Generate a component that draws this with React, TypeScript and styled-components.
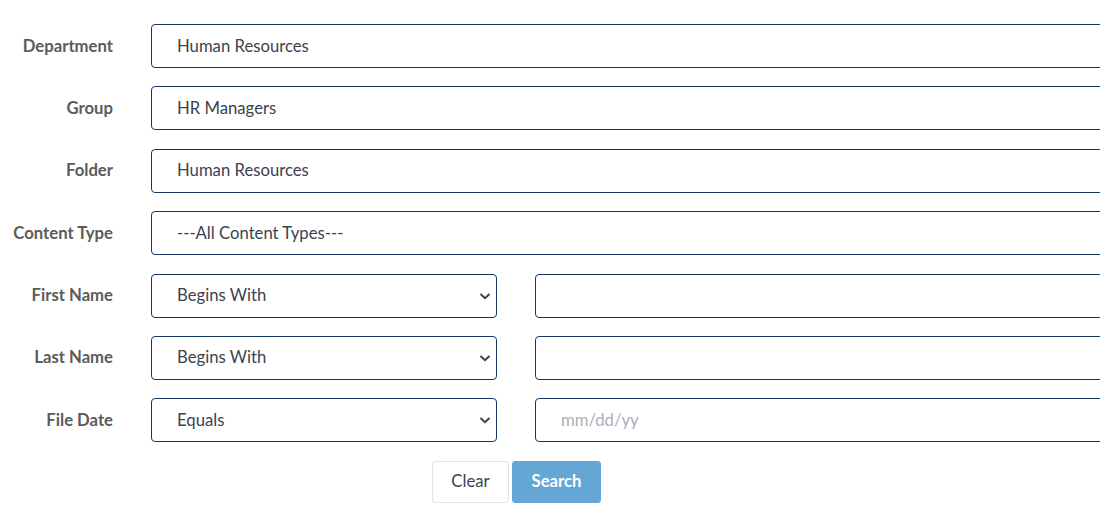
import styled, { createGlobalStyle } from 'styled-components';

const GlobalStyle = createGlobalStyle`
  html, body {
    margin: 0;
    padding: 0;
    background: #ffffff;
    overflow: hidden;
  }
  body {
    font-family: Lato, 'Liberation Sans', sans-serif;
  }
`;

const Form = styled.form`
  display: grid;
  grid-template-columns: 113px 1fr;
  column-gap: 38px;
  row-gap: 18.4px;
  padding-top: 24px;
  width: 1140px;
`;

const Label = styled.label`
  display: flex;
  align-items: center;
  justify-content: flex-end;
  height: 43px;
  padding-bottom: 1px;
  font-size: 16.7px;
  font-weight: 700;
  color: #5b5b5b;
  white-space: nowrap;
`;

const Pair = styled.div`
  display: grid;
  grid-template-columns: 346px 1fr;
  column-gap: 38px;
`;

const fieldBase = `
  box-sizing: border-box;
  height: 44px;
  width: 100%;
  border: 1px solid #12385f;
  border-radius: 4px;
  background: #ffffff;
  padding: 0 25px 1px;
  font-family: Lato, 'Liberation Sans', sans-serif;
  font-size: 16.7px;
  color: #3b4350;
  outline: none;
`;

const TextBox = styled.input`
  ${fieldBase}
  &::placeholder {
    color: #a9b0bb;
  }
`;

const SelectWrap = styled.div`
  position: relative;
`;

const Select = styled.select`
  ${fieldBase}
  appearance: none;
  -webkit-appearance: none;
`;

const Chevron = styled.svg`
  position: absolute;
  right: 6px;
  top: 17px;
  pointer-events: none;
`;

const Buttons = styled.div`
  display: flex;
  gap: 3px;
  padding-left: 281px;
`;

const Button = styled.button<{ $primary?: boolean }>`
  box-sizing: border-box;
  height: 42px;
  width: ${(p) => (p.$primary ? '89px' : '77px')};
  border-radius: 3px;
  border: 1px solid ${(p) => (p.$primary ? '#64a7d5' : '#e3e3e3')};
  background: ${(p) => (p.$primary ? '#64a7d5' : '#ffffff')};
  color: ${(p) => (p.$primary ? '#ffffff' : '#3b4350')};
  font-family: Lato, 'Liberation Sans', sans-serif;
  font-size: 16.7px;
  font-weight: ${(p) => (p.$primary ? 700 : 400)};
  padding: 0 0 1px;
  cursor: pointer;
`;

function DropDown({ value }: { value: string }) {
  return (
    <SelectWrap>
      <Select defaultValue={value}>
        <option>{value}</option>
      </Select>
      <Chevron width="12" height="10" viewBox="0 0 12 10">
        <path d="M1.5 3 L6 7.2 L10.5 3" fill="none" stroke="#3b4350" strokeWidth="2" />
      </Chevron>
    </SelectWrap>
  );
}

function App() {
  return (
    <>
      <GlobalStyle />
      <Form onSubmit={(e) => e.preventDefault()}>
        <Label>Department</Label>
        <TextBox defaultValue="Human Resources" readOnly />

        <Label>Group</Label>
        <TextBox defaultValue="HR Managers" readOnly />

        <Label>Folder</Label>
        <TextBox defaultValue="Human Resources" readOnly />

        <Label>Content Type</Label>
        <TextBox defaultValue="---All Content Types---" readOnly />

        <Label>First Name</Label>
        <Pair>
          <DropDown value="Begins With" />
          <TextBox />
        </Pair>

        <Label>Last Name</Label>
        <Pair>
          <DropDown value="Begins With" />
          <TextBox />
        </Pair>

        <Label>File Date</Label>
        <Pair>
          <DropDown value="Equals" />
          <TextBox placeholder="mm/dd/yy" />
        </Pair>

        <div />
        <Buttons>
          <Button type="button">Clear</Button>
          <Button type="submit" $primary>
            Search
          </Button>
        </Buttons>
      </Form>
    </>
  );
}

export default App;
